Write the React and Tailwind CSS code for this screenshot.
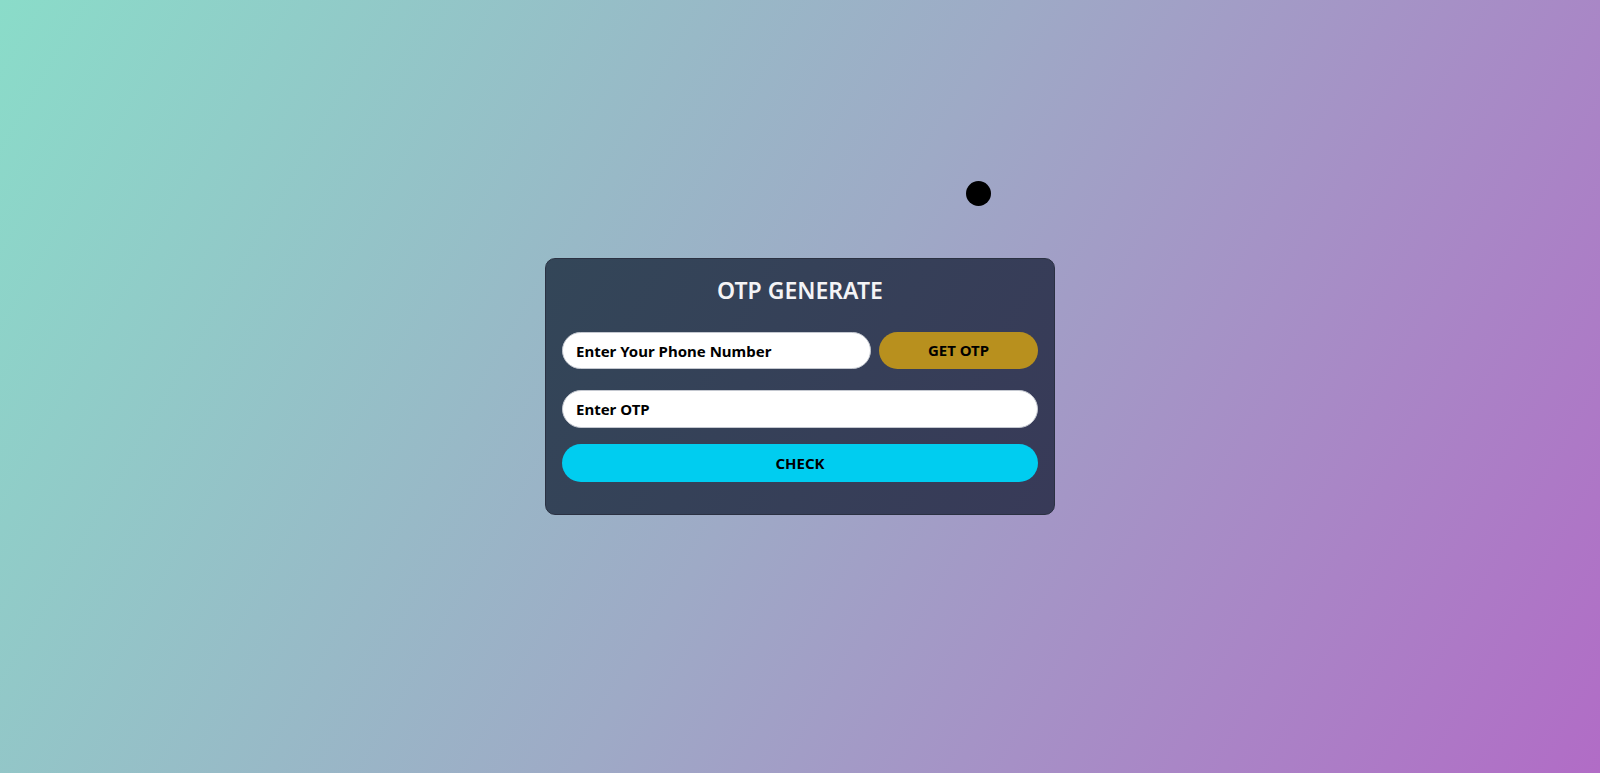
export default function App() {
  return (
    <div
      className="relative flex h-[773px] w-full items-center justify-center overflow-hidden bg-[linear-gradient(120deg,#8adcc9_0%,#9eaac6_50%,#b16cc6_100%)]"
      style={{ fontFamily: '"Noto Sans", "Open Sans", sans-serif' }}
    >
      <div className="absolute left-[966px] top-[181px] h-[25px] w-[25px] rounded-full bg-black" />
      <div className="flex w-[510px] flex-col rounded-[10px] border border-[#2b3142] bg-[linear-gradient(120deg,#334658,#383a58)] px-4 pb-8 pt-[15px]">
        <h1 className="text-center text-[23px] font-semibold leading-8 text-[#f4f4f6]">OTP GENERATE</h1>
        <div className="mt-[26px] flex gap-2">
          <input
            className="h-[37px] w-[309px] rounded-full border border-[#c4c8d0] bg-white px-[13px] text-[15px] font-bold text-black placeholder:text-black outline-none"
            placeholder="Enter Your Phone Number"
          />
          <button className="h-[37px] flex-1 rounded-full bg-[#b8901e] text-[15px] font-bold text-black">GET OTP</button>
        </div>
        <input
          className="mt-[21px] h-[38px] w-full rounded-full border border-[#c4c8d0] bg-white px-[13px] text-[15px] font-bold text-black placeholder:text-black outline-none"
          placeholder="Enter OTP"
        />
        <button className="mt-4 h-[38px] w-full rounded-full bg-[#00cdf0] text-[15px] font-bold text-black">CHECK</button>
      </div>
    </div>
  );
}
